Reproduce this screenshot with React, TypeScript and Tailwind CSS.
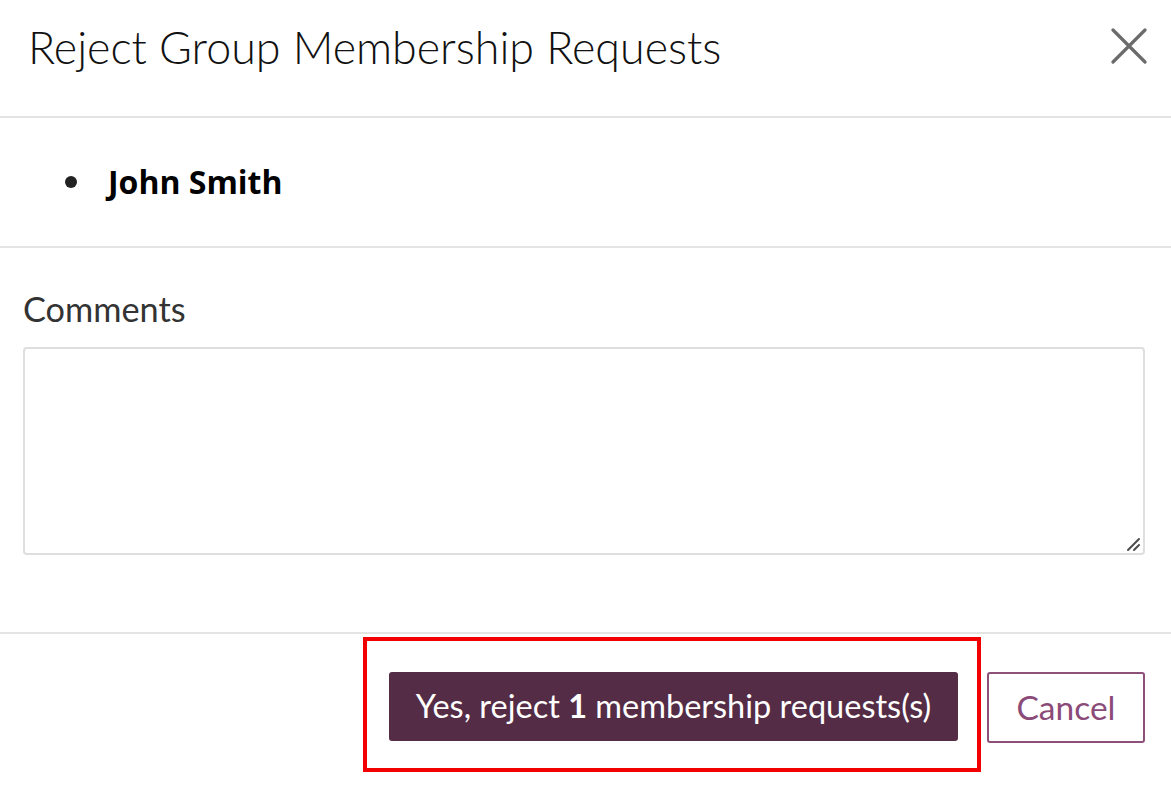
const sans = "font-['Lato','Open_Sans',sans-serif]";

function ResizeGrip() {
  return (
    <svg
      className="pointer-events-none absolute bottom-[3px] right-[3px]"
      width="18"
      height="18"
      viewBox="0 0 18 18"
      fill="none"
    >
      <path d="M4 16 L15 5" stroke="#4a4a4a" strokeWidth="2" strokeLinecap="round" />
      <path d="M10 16 L15 11" stroke="#4a4a4a" strokeWidth="2" strokeLinecap="round" />
    </svg>
  );
}

function CloseIcon() {
  return (
    <svg width="36" height="36" viewBox="0 0 36 36" fill="none">
      <path d="M2 2 L34 34 M34 2 L2 34" stroke="#6b6b6b" strokeWidth="3.2" strokeLinecap="round" />
    </svg>
  );
}

export default function App() {
  const requests = ["John Smith"];

  return (
    <div className={`min-h-[789px] w-full bg-white ${sans}`}>
      <header className="flex h-[118px] items-center justify-between border-b-2 border-[#e4e4e4] pl-[28px] pr-[24px]">
        <h1 className="pb-[22px] text-[44.8px] font-light leading-none text-[#111]">
          Reject Group Membership Requests
        </h1>
        <button type="button" className="pb-[24px]" aria-label="Close">
          <CloseIcon />
        </button>
      </header>

      <section className="flex h-[130px] items-center border-b-2 border-[#e4e4e4] pl-[65px]">
        <ul className="space-y-2">
          {requests.map((name) => (
            <li key={name} className="flex items-center gap-[31px]">
              <span className="h-[12px] w-[12px] rounded-full bg-[#222]" />
              <span className="font-['Open_Sans',sans-serif] text-[32px] font-bold text-black">
                {name}
              </span>
            </li>
          ))}
        </ul>
      </section>

      <section className="h-[384px] pl-[23px] pr-[26px] pt-[44px]">
        <label className="block text-[34.3px] leading-none text-[#333]">Comments</label>
        <div className="relative mt-[21px]">
          <textarea className="block h-[208px] w-full resize-none rounded-[4px] border-2 border-[#dedede] bg-white px-3 py-2 text-[24px] outline-none" />
          <ResizeGrip />
        </div>
      </section>

      <footer className="flex justify-end border-t-2 border-[#e4e4e4] pr-[26px] pt-[3px]">
        <div className="border-4 border-[#f20000] pb-[27px] pl-[22px] pr-[19px] pt-[31px]">
          <button
            type="button"
            className="flex h-[69px] w-[569px] items-center justify-center rounded-[3px] bg-[#552c45] text-[32.5px] text-white"
          >
            Yes, reject&nbsp;<b className="font-bold">1</b>&nbsp;membership requests(s)
          </button>
        </div>
        <button
          type="button"
          className="ml-[6px] mt-[35px] flex h-[71px] w-[158px] items-center justify-center rounded-[3px] border-2 border-[#8d5079] bg-white text-[33.5px] text-[#8b4b78]"
        >
          Cancel
        </button>
      </footer>
    </div>
  );
}
